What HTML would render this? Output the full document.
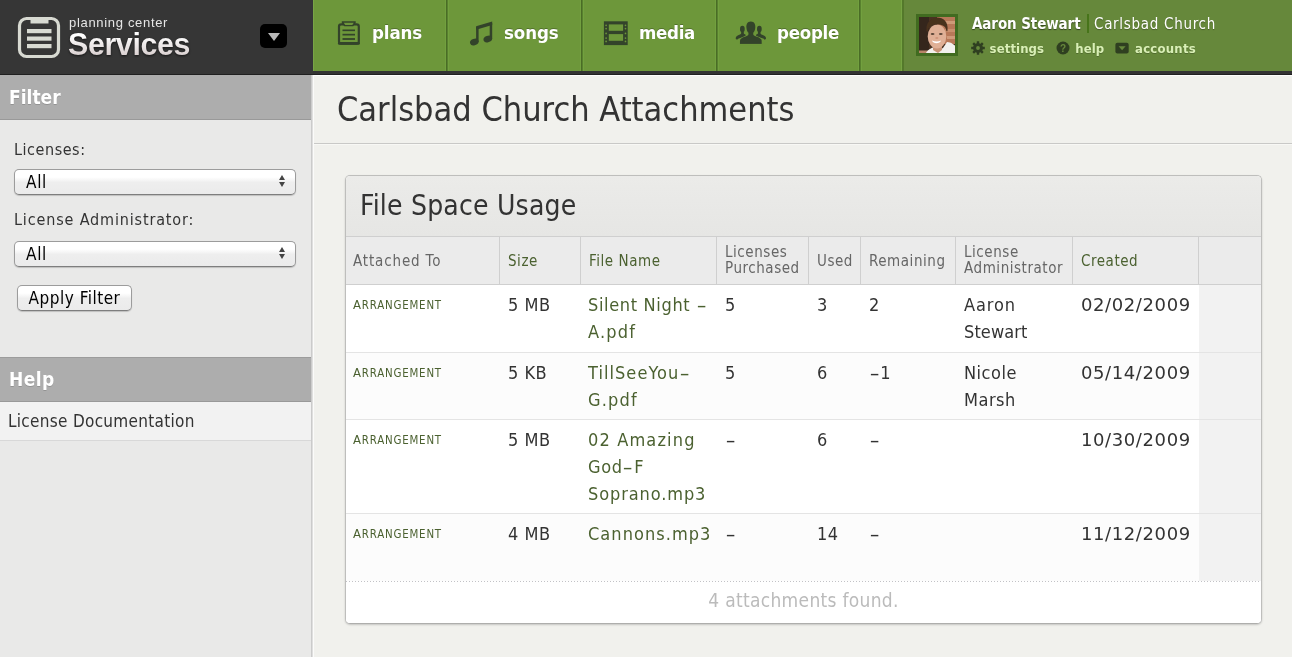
<!DOCTYPE html>
<html lang="en">
<head>
<meta charset="utf-8">
<title>Carlsbad Church Attachments</title>
<style>
*{box-sizing:border-box;margin:0;padding:0}
html,body{width:1292px;height:657px;overflow:hidden}
body{background:#f1f1ed;font-family:"DejaVu Sans Condensed","Liberation Sans",sans-serif;color:#333;position:relative}
#w{position:absolute;left:0;top:0;width:1292px;height:657px;will-change:transform;overflow:hidden}
.abs{position:absolute;white-space:nowrap}
/* ---------- header ---------- */
#hl{left:0;top:0;width:313px;height:75px;background:#363636;z-index:2}
#dk{left:0;top:74px;width:1292px;height:1px;background:#202020;z-index:3}
#wl{left:312px;top:75px;width:980px;height:1px;background:#fdfdfc}
#wv{left:312px;top:75px;width:2px;height:582px;background:linear-gradient(90deg,#dfdfde 50%,#fbfbfa 50%)}
#gl{left:313px;top:0;width:1px;height:71px;background:#78a546;z-index:3}
#nav{left:312px;top:0;width:980px;height:75px;background:#6d973a;border-bottom:4px solid #333}
#user{left:590px;top:0;width:390px;height:71px;background:#66883b;border-left:2px solid #54792b;box-shadow:-1px 0 0 #76a443}
.div{top:0;width:4px;height:71px;background:linear-gradient(90deg,#72a03f 0,#72a03f 25%,#4a6c26 25%,#4a6c26 50%,#58812e 50%,#58812e 75%,#72a03f 75%)}
.nt{font-weight:bold;color:#fff;font-size:18.500px;line-height:24px;letter-spacing:-.1px;text-shadow:0 -1px 0 rgba(0,0,0,.25)}
.un{font-weight:bold;font-size:15px;line-height:20px;color:#fff;letter-spacing:-.1px;text-shadow:0 1px 1px rgba(0,0,0,.5)}
.uc{font-size:15px;line-height:20px;color:#fff;letter-spacing:.700px;text-shadow:0 1px 1px rgba(0,0,0,.3)}
.ul{font-weight:bold;font-size:13px;line-height:16px;color:#d9efb6;letter-spacing:.1px;text-shadow:0 1px 0 rgba(0,0,0,.2)}
#logo1{left:69px;top:15px;font-family:"Liberation Sans",sans-serif;font-size:13px;color:#e6e6e6;letter-spacing:.68px}
#logo2{left:67.500px;top:26px;font-family:"Liberation Sans",sans-serif;font-weight:bold;font-size:32px;letter-spacing:-.4px;transform:scaleX(.95);transform-origin:0 0;background:linear-gradient(#fff 25%,#d6cccc 85%);-webkit-background-clip:text;background-clip:text;color:transparent;filter:drop-shadow(0 1px 1px rgba(0,0,0,.6))}
#dd{left:260px;top:24px;width:27px;height:24px;background:#000;border-radius:5px}
#dd:after{content:"";position:absolute;left:7.500px;top:9px;border:6px solid transparent;border-top:8px solid #b8b8b8;border-bottom:0}
/* ---------- sidebar ---------- */
#side{left:0;top:75px;width:312px;height:582px;background:#e9e9e8;border-right:1px solid #cbcbcb}
.sh{left:0;width:311px;height:45px;background:#adadad;border-bottom:1px solid #999;color:#fff;font-weight:bold;font-size:19px;line-height:44px;padding-left:9px;text-shadow:0 1px 0 rgba(0,0,0,.15)}
.lbl{font-size:16px;line-height:20px;color:#333;letter-spacing:.550px}
.sel{left:14px;width:282px;height:26px;border:1px solid #9c9c9c;border-bottom-color:#7e7e7e;border-radius:5px;background:linear-gradient(#fff,#fff 30%,#eee 52%,#ebebeb);font-size:17px;line-height:24px;padding-left:11px;color:#000;box-shadow:0 1px 1px rgba(0,0,0,.18);letter-spacing:.700px}
.sel i{position:absolute;right:10px;width:0;height:0;border:3.500px solid transparent}
.sel i.u{top:4.500px;border-bottom:5px solid #444;border-top:0}
.sel i.d{top:11.500px;border-top:5px solid #444;border-bottom:0}
#btn{left:17px;top:210px;width:115px;height:26px;border:1px solid #9c9c9c;border-bottom-color:#7e7e7e;border-radius:5px;background:linear-gradient(#fff,#fff 30%,#eee 52%,#ebebeb);font-size:17px;line-height:25px;text-align:center;color:#000;box-shadow:0 1px 1px rgba(0,0,0,.18);letter-spacing:.500px}
#doc{left:0;top:327px;width:311px;height:39px;background:#f2f2f2;border-bottom:1px solid #d8d8d8;font-size:17px;line-height:38px;padding-left:8px;letter-spacing:.300px;color:#333}
/* ---------- main ---------- */
#h1{left:337px;top:87px;font-size:34px;line-height:44px;color:#333;font-weight:normal;letter-spacing:0}
#hr{left:314px;top:143px;width:978px;height:2px;background:linear-gradient(#c9c9c7 50%,#f8f8f5 50%)}
#box{left:345px;top:175px;width:917px;height:449px;border:1px solid #bebebc;border-bottom-color:#aeaeac;border-radius:5px;background:#fff;box-shadow:0 1px 2px rgba(0,0,0,.18)}
#bt{left:0;top:0;width:915px;height:60px;background:linear-gradient(#ebebe9,#e6e6e4);border-radius:4px 4px 0 0}
#bt span{position:absolute;left:14px;top:11.500px;font-size:28px;line-height:36px;letter-spacing:.200px;color:#333}
#th{left:0;top:60px;width:915px;height:49px;background:#ebebeb;border-top:1px solid #cfcfcf;border-bottom:1px solid #cfcfcf}
.c{top:0;height:47px;border-left:1px solid #cfcfcf;font-size:15px;letter-spacing:.550px;color:#666;padding-left:8px;line-height:49px}
.c.g{color:#4b6130}
.c.two{line-height:16px;padding-top:7px}
.row{left:0;width:915px;border-bottom:1px solid #e4e4e4;background:#fff}
.row.alt{background:#fcfcfc}
.row .last{position:absolute;right:0;top:0;bottom:0;width:62px;background:#f2f2f2}
.t{font-size:18px;line-height:27px;letter-spacing:.5px;color:#333;white-space:normal}
.t.g{color:#4b6130;letter-spacing:.650px}
.t.d{font-family:"DejaVu Sans","Liberation Sans",sans-serif;letter-spacing:.600px}
.hy{display:inline-block;transform:scaleX(1.750);margin:0 2.500px 0 2.500px}
.arr{left:7px;font-size:11.400px;letter-spacing:.800px;color:#4b6130;line-height:16px}
.arr b{font-weight:normal;font-size:13px}
#foot{left:0;top:405px;width:915px;height:42px;text-align:center;font-size:19px;line-height:38px;color:#bbb;letter-spacing:.300px;background:#fff;border-radius:0 0 4px 4px}
#foot:before{content:"";position:absolute;left:0;top:0;width:100%;height:1px;background:repeating-linear-gradient(90deg,#c2c2c6 0,#c2c2c6 1px,#fff 1px,#fff 3px)}
</style>
</head>
<body>
<div id="w">
<!-- header -->
<div id="hl" class="abs">
  <svg class="abs" style="left:16px;top:15px" width="46" height="45" viewBox="0 0 46 45">
    <rect x="3.5" y="3.5" width="39" height="38" rx="7" fill="none" stroke="#d8dad2" stroke-width="3.2"/>
    <rect x="14.5" y="4" width="18" height="4.5" fill="#d8dad2"/>
    <rect x="11" y="14" width="24.5" height="4.2" fill="#d8dad2"/>
    <rect x="11" y="21.5" width="24.5" height="4.2" fill="#d8dad2"/>
    <rect x="11" y="29" width="24.5" height="4.2" fill="#d8dad2"/>
  </svg>
  <div id="logo1" class="abs">planning center</div>
  <div id="logo2" class="abs">Services</div>
  <div id="dd" class="abs"></div>
</div>
<div id="nav" class="abs">
  <div class="div abs" style="left:133px"></div>
  <div class="div abs" style="left:268px"></div>
  <div class="div abs" style="left:403px"></div>
  <div class="div abs" style="left:546px"></div>
  <div class="nt abs" style="left:60px;top:21px">plans</div>
  <div class="nt abs" style="left:192px;top:21px">songs</div>
  <div class="nt abs" style="left:327px;top:21px;letter-spacing:-.300px">media</div>
  <div class="nt abs" style="left:465px;top:21px;letter-spacing:-.250px">people</div>

  <!-- plans icon -->
  <svg class="abs" style="left:24px;top:20px" width="26" height="27" viewBox="0 0 26 27">
    <rect x="3" y="4.300" width="19.800" height="19.300" rx="2.200" fill="none" stroke="#33432a" stroke-width="2.200"/>
    <rect x="1.900" y="22" width="22" height="2.800" rx="1.400" fill="#33432a"/>
    <path d="M5.800 1.200h13.900v1.700l-2.500 3.400h-8.900l-2.500-3.400z" fill="#33432a"/>
    <path d="M7.700 2.800h10.100l-1.500 2.100h-7.100z" fill="#6d973a"/>
    <rect x="6.500" y="9.500" width="12.500" height="1.650" fill="#33432a"/>
    <rect x="6.500" y="13.800" width="12.500" height="1.700" fill="#33432a"/>
    <rect x="6.500" y="18.100" width="12.500" height="1.800" fill="#33432a"/>
  </svg>
  <!-- songs icon -->
  <svg class="abs" style="left:156px;top:20px" width="26" height="27" viewBox="0 0 26 27">
    <g fill="#33432a">
      <path d="M8.100 6.200L24.200 1.600v3.400L8.100 9.700z"/>
      <rect x="8.100" y="7" width="2.500" height="15"/>
      <rect x="21.700" y="3" width="2.500" height="16"/>
      <ellipse cx="6.300" cy="22" rx="4.400" ry="3.200" transform="rotate(-20 6.300 22)"/>
      <ellipse cx="19.800" cy="19" rx="4.400" ry="3.200" transform="rotate(-20 19.800 19)"/>
    </g>
  </svg>
  <!-- media icon -->
  <svg class="abs" style="left:291px;top:20px" width="26" height="27" viewBox="0 0 26 27">
    <rect x=".900" y="1.300" width="23.800" height="23.800" fill="#33432a"/>
    <rect x="5.800" y="4.400" width="14.300" height="6.400" fill="#6d973a"/>
    <rect x="5.800" y="14.100" width="14.300" height="6.700" fill="#6d973a"/>
    <g fill="#6d973a"><circle cx="3.100" cy="5.300" r=".850"/><circle cx="3.100" cy="8.600" r=".850"/><circle cx="3.100" cy="13.400" r=".850"/><circle cx="3.100" cy="18.100" r=".850"/><circle cx="3.100" cy="21.400" r=".850"/>
    <circle cx="22.500" cy="5.300" r=".850"/><circle cx="22.500" cy="8.600" r=".850"/><circle cx="22.500" cy="13.400" r=".850"/><circle cx="22.500" cy="18.100" r=".850"/><circle cx="22.500" cy="21.400" r=".850"/></g>
  </svg>
  <!-- people icon -->
  <svg class="abs" style="left:423px;top:20px" width="32" height="26" viewBox="0 0 32 26">
    <g fill="#33432a">
      <g id="sp"><ellipse cx="7.350" cy="9.100" rx="2.350" ry="3.250"/><path d="M6.200 11.800h2.500l.2 2 1.800 1v2l-5.700 1.200c-1.500.5-2.500 1-2.800 1.700l-1.400-.7c-.2-1.500.2-2.400 1.200-3 1.500-1 3.500-1.400 4.100-2.200z"/></g>
      <g transform="translate(31.700 0) scale(-1 1)"><ellipse cx="7.350" cy="9.100" rx="2.350" ry="3.250"/><path d="M6.200 11.800h2.500l.2 2 1.800 1v2l-5.700 1.200c-1.500.5-2.500 1-2.800 1.700l-1.400-.7c-.2-1.500.2-2.400 1.200-3 1.500-1 3.500-1.400 4.100-2.200z"/></g>
      <path stroke="#6d973a" stroke-width="1.300" paint-order="stroke" d="M15.850 1.600C12.400 1.600 11.200 4.500 11.400 7.500 11.500 10 12.500 11.800 13.500 12.800L13.300 15C11.900 16.500 6.900 17 5.300 19.500 4.900 20.500 5 22 5 23.900H26.700C26.700 22 26.800 20.500 26.400 19.500 24.800 17 19.800 16.500 18.400 15L18.200 12.800C19.200 11.800 20.200 10 20.300 7.500 20.500 4.500 19.300 1.600 15.850 1.600Z"/>
      <rect x="4.400" y="23.900" width="23" height="1.500" fill="#6d973a"/>
    </g>
  </svg>
  <div id="user" class="abs">
    <svg class="abs" style="left:12px;top:14px" width="42" height="42" viewBox="0 0 42 42">
      <defs><filter id="bl" x="-10%" y="-10%" width="120%" height="120%"><feGaussianBlur stdDeviation=".7"/></filter><clipPath id="cp"><rect x="3" y="3" width="36" height="36"/></clipPath></defs>
      <rect width="42" height="42" fill="#416b20"/>
      <g clip-path="url(#cp)"><g filter="url(#bl)" transform="translate(3 3)">
        <rect x="-2" y="-2" width="40" height="40" fill="#4a3323"/>
        <rect x="-2" y="-2" width="12" height="36" fill="#35261c"/>
        <rect x="18" y="-2" width="20" height="29" fill="#b87858"/>
        <rect x="22" y="4" width="16" height="3" fill="#cf9a78"/><rect x="26" y="12" width="12" height="3" fill="#c98e6c"/><rect x="28" y="19" width="10" height="3" fill="#d09a7a"/>
        <rect x="-2" y="33.500" width="12" height="5" fill="#b98468"/>
        <path d="M6 38c2-5 6-7 9-8l3 4 6-3 4-6c4 0 8 3 10 6v7z" fill="#f3f1ee"/>
        <path d="M14 28h9v5l-4 3-5-3z" fill="#c99478"/>
        <ellipse cx="18" cy="19.500" rx="9.300" ry="12" fill="#e0b096"/>
        <path d="M7.500 14c-1-8 4-13.500 10.500-13.500s11.500 4 10.500 13c-.5 1.500-1 1-1.500-1-.5-3.500-4-5-9-5s-8 2-8.800 5.500c-.5 2-1.200 2.500-1.700 1z" fill="#49301f"/>
        <ellipse cx="13.600" cy="17" rx="1.900" ry="1" fill="#5a4436"/><ellipse cx="21.800" cy="17" rx="1.900" ry="1" fill="#5a4436"/>
        <path d="M13 23.500c3 1.200 6.500 1.200 9 0-1 3.500-8 3.500-9 0z" fill="#fff"/>
        <ellipse cx="17.800" cy="21" rx="1.600" ry="1" fill="#cf957a"/>
      </g></g>
    </svg>
    <div class="abs un" style="left:68px;top:14.400px">Aaron Stewart</div>
    <div class="abs" style="left:183px;top:14px;width:1.500px;height:19px;background:#47741a"></div>
    <div class="abs uc" style="left:190px;top:14.400px">Carlsbad Church</div>
    <svg class="abs" style="left:67.200px;top:41px" width="14" height="14" viewBox="0 0 14 14"><path fill-rule="evenodd" fill="#2f3f20" d="M11.840 5.760 L13.800 5.810 L13.800 8.190 L11.840 8.240 L11.300 9.550 L12.650 10.970 L10.970 12.650 L9.550 11.300 L8.240 11.840 L8.190 13.800 L5.810 13.800 L5.760 11.840 L4.450 11.300 L3.030 12.650 L1.350 10.970 L2.700 9.550 L2.160 8.240 L0.200 8.190 L0.200 5.810 L2.160 5.760 L2.700 4.450 L1.350 3.030 L3.030 1.350 L4.450 2.700 L5.760 2.160 L5.810 0.200 L8.190 0.200 L8.240 2.160 L9.550 2.700 L10.970 1.350 L12.650 3.030 L11.300 4.450Z M7 5.100a1.900 1.900 0 1 0 0 3.800a1.900 1.900 0 1 0 0-3.800z"/></svg>
    <div class="abs ul" style="left:85.600px;top:40.800px">settings</div>
    <svg class="abs" style="left:152px;top:41px" width="14" height="14" viewBox="0 0 14 14"><circle cx="7" cy="7" r="6.500" fill="#2f3f20"/><text x="7" y="10.600" text-anchor="middle" font-family="Liberation Sans, sans-serif" font-weight="bold" font-size="10" fill="#66883b">?</text></svg>
    <div class="abs ul" style="left:171.300px;top:40.800px">help</div>
    <svg class="abs" style="left:210.800px;top:42px" width="14" height="12" viewBox="0 0 14 12"><rect x=".400" y=".800" width="13.300" height="10.800" rx="2" fill="#2f3f20"/><path d="M3.600 4.200h7l-3.500 4z" fill="#66883b"/></svg>
    <div class="abs ul" style="left:231px;top:40.800px;letter-spacing:.250px">accounts</div>
  </div>
</div>
<div id="dk" class="abs"></div><div id="wl" class="abs"></div><div id="wv" class="abs"></div><div id="gl" class="abs"></div>
<!-- sidebar -->
<div id="side" class="abs">
  <div class="sh abs" style="top:0">Filter</div>
  <div class="lbl abs" style="left:14px;top:64.750px">Licenses:</div>
  <div class="sel abs" style="top:94px">All<i class="u"></i><i class="d"></i></div>
  <div class="lbl abs" style="left:14px;top:134.750px;letter-spacing:.850px">License Administrator:</div>
  <div class="sel abs" style="top:166px">All<i class="u"></i><i class="d"></i></div>
  <div id="btn" class="abs">Apply Filter</div>
  <div class="sh abs" style="top:282px;letter-spacing:.400px;border-top:1px solid #9c9c9c;line-height:43px">Help</div>
  <div id="doc" class="abs">License Documentation</div>
</div>
<!-- main -->
<h1 id="h1" class="abs">Carlsbad Church Attachments</h1>
<div id="hr" class="abs"></div>
<div id="box" class="abs">
  <div id="bt" class="abs"><span>File Space Usage</span></div>
  <div id="th" class="abs">
    <div class="c abs" style="left:0;border-left:0;letter-spacing:.850px;padding-left:7px">Attached To</div>
    <div class="c g abs" style="left:153px">Size</div>
    <div class="c g abs" style="left:234px">File Name</div>
    <div class="c two abs" style="left:370px">Licenses<br>Purchased</div>
    <div class="c abs" style="left:462px">Used</div>
    <div class="c abs" style="left:514px">Remaining</div>
    <div class="c two abs" style="left:609px">License<br>Administrator</div>
    <div class="c g abs" style="left:726px">Created</div>
    <div class="c abs" style="left:852px;width:63px"></div>
  </div>
  <div class="row abs" style="top:109px;height:68px">
    <div class="arr abs" style="top:11.500px"><b>A</b>RRANGEMENT</div>
    <div class="t abs" style="left:162px;top:6px">5 MB</div>
    <div class="t g abs" style="left:242px;top:6px">Silent Night <span class="hy">-</span><br><span style="letter-spacing:1.200px">A.pdf</span></div>
    <div class="t abs" style="left:379px;top:6px">5</div>
    <div class="t abs" style="left:471px;top:6px">3</div>
    <div class="t abs" style="left:523px;top:6px">2</div>
    <div class="t abs" style="left:618px;top:6px"><span style="letter-spacing:.900px">Aaron</span><br><span style="letter-spacing:.100px">Stewart</span></div>
    <div class="t d abs" style="left:735px;top:6px">02/02/2009</div>
    <div class="last"></div>
  </div>
  <div class="row alt abs" style="top:177px;height:67px">
    <div class="arr abs" style="top:11.500px"><b>A</b>RRANGEMENT</div>
    <div class="t abs" style="left:162px;top:6px">5 KB</div>
    <div class="t g abs" style="left:242px;top:6px"><span style="letter-spacing:1.050px">TillSeeYou<span class="hy">-</span></span><br><span style="letter-spacing:1.200px">G.pdf</span></div>
    <div class="t abs" style="left:379px;top:6px">5</div>
    <div class="t abs" style="left:471px;top:6px">6</div>
    <div class="t abs" style="left:523px;top:6px"><span class="hy">-</span>1</div>
    <div class="t abs" style="left:618px;top:6px">Nicole<br>Marsh</div>
    <div class="t d abs" style="left:735px;top:6px">05/14/2009</div>
    <div class="last"></div>
  </div>
  <div class="row abs" style="top:244px;height:94px">
    <div class="arr abs" style="top:11.500px"><b>A</b>RRANGEMENT</div>
    <div class="t abs" style="left:162px;top:6px">5 MB</div>
    <div class="t g abs" style="left:242px;top:6px"><span style="letter-spacing:1.150px">02 Amazing</span><br>God<span class="hy">-</span>F<br><span style="letter-spacing:.900px">Soprano.mp3</span></div>
    <div class="t abs" style="left:379px;top:6px"><span class="hy">-</span></div>
    <div class="t abs" style="left:471px;top:6px">6</div>
    <div class="t abs" style="left:523px;top:6px"><span class="hy">-</span></div>
    <div class="t d abs" style="left:735px;top:6px">10/30/2009</div>
    <div class="last"></div>
  </div>
  <div class="row alt abs" style="top:338px;height:67px;border-bottom:0">
    <div class="arr abs" style="top:11.500px"><b>A</b>RRANGEMENT</div>
    <div class="t abs" style="left:162px;top:6px">4 MB</div>
    <div class="t g abs" style="left:242px;top:6px;letter-spacing:1.050px">Cannons.mp3</div>
    <div class="t abs" style="left:379px;top:6px"><span class="hy">-</span></div>
    <div class="t abs" style="left:471px;top:6px">14</div>
    <div class="t abs" style="left:523px;top:6px"><span class="hy">-</span></div>
    <div class="t d abs" style="left:735px;top:6px">11/12/2009</div>
    <div class="last"></div>
  </div>
  <div id="foot" class="abs">4 attachments found.</div>
</div>
</div>
</body>
</html>
